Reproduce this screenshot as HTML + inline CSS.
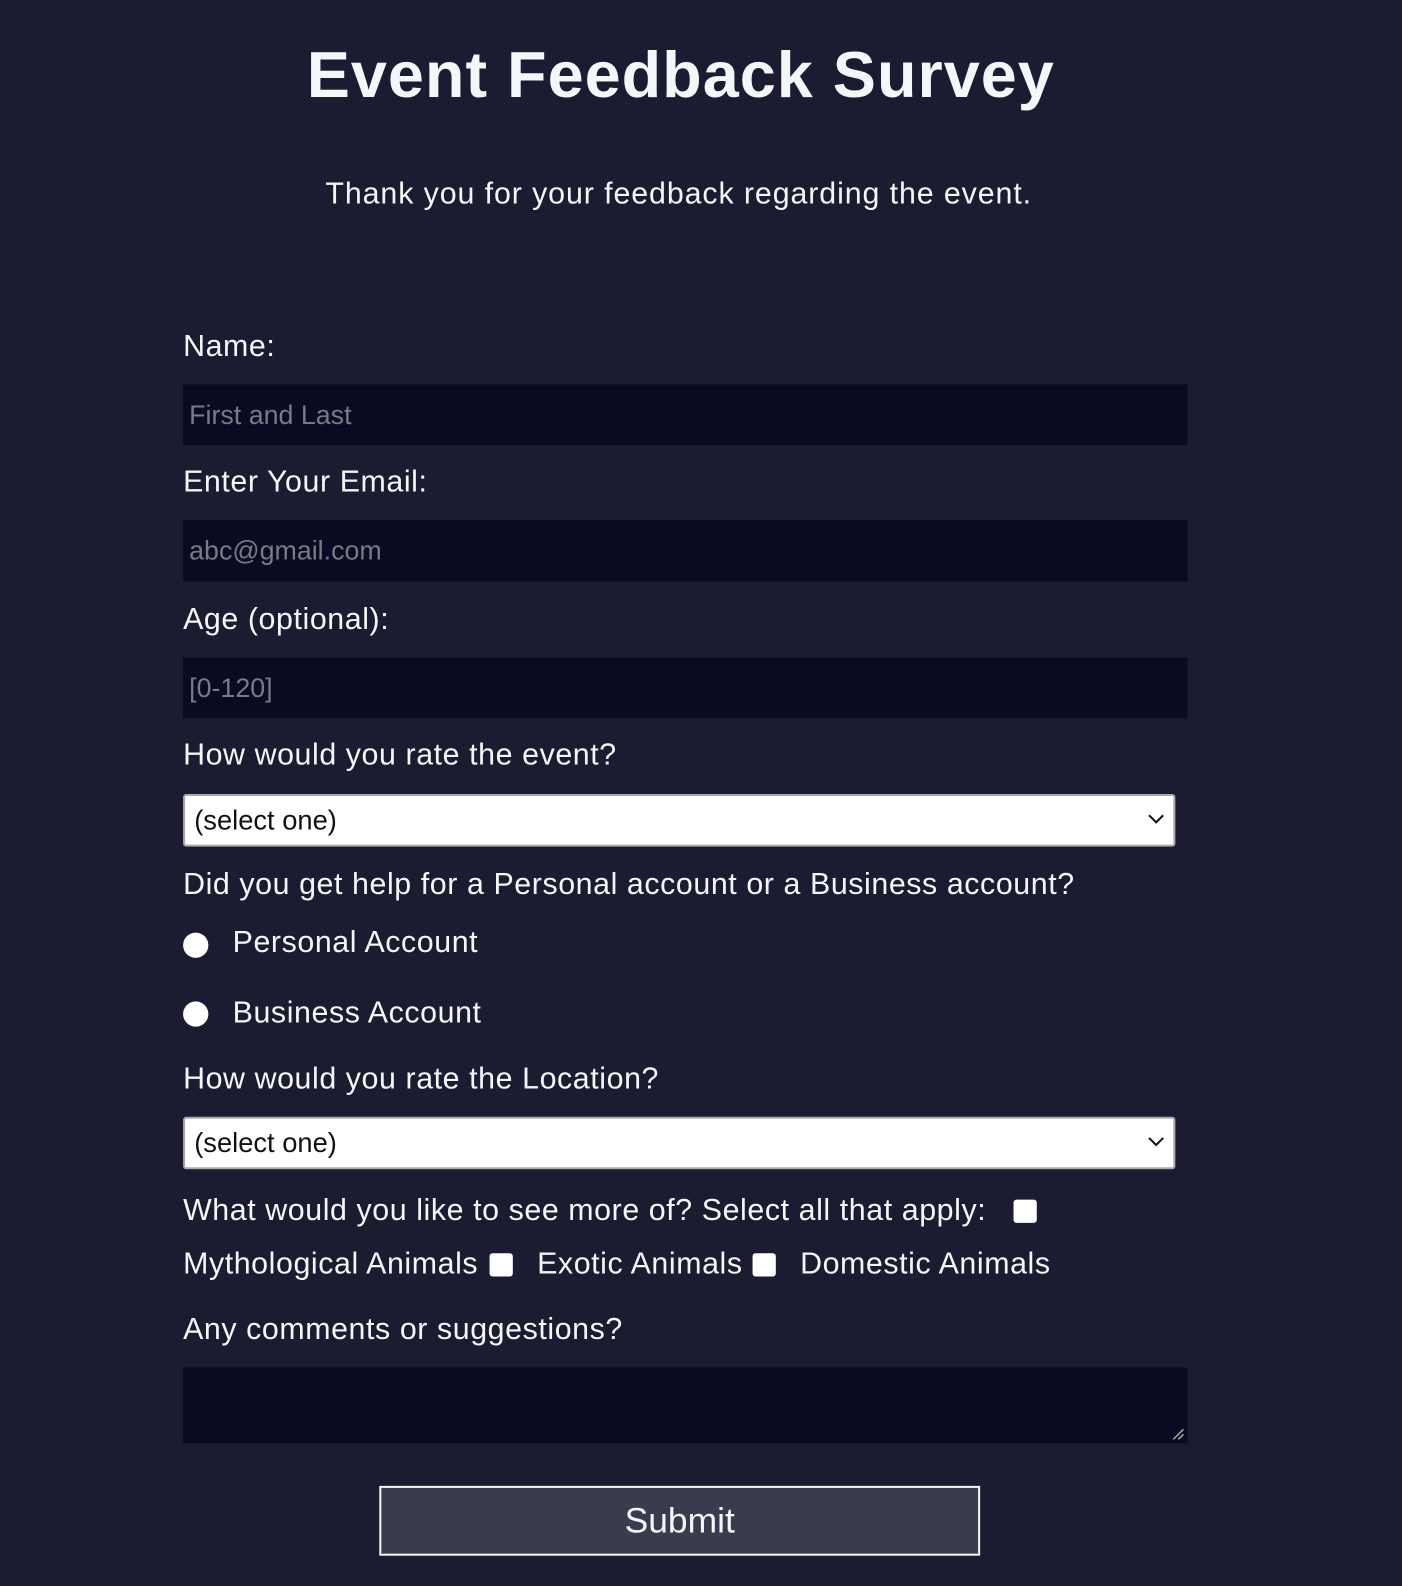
<!DOCTYPE html>
<html><head><meta charset="utf-8"><style>
*{margin:0;padding:0;box-sizing:border-box}
body{width:1402px;height:1586px;background:#1b1b32;overflow:hidden}
#w{width:1386px;height:1568px;position:relative;transform:scale(1.0115);transform-origin:0 0;color:#f5f6f7;font-family:"Liberation Sans",Tahoma,sans-serif}
.a{position:absolute;white-space:nowrap}
.t{font-size:30px;line-height:34px;letter-spacing:0.58px}
.in{position:absolute;left:181px;width:993px;background:#0a0a23;color:#7a7a85;font-size:26.5px;padding-left:6px;display:flex;align-items:center}
.sel{position:absolute;left:181px;width:981px;height:52px;background:#fff;border:2px solid #aaa;border-radius:3px;color:#111;font-size:27px;padding-left:9px;display:flex;align-items:center}
.sel svg{position:absolute;right:9px;top:18px}
.rad{position:absolute;width:25px;height:25px;border-radius:50%;background:#fff;left:181px}
.cb{position:absolute;width:23px;height:23px;background:#fff;border-radius:3px}
</style></head><body><div id="w">
<div class="a" style="left:0;width:1346px;text-align:center;top:36px;font-size:64px;font-weight:bold;line-height:76px;letter-spacing:1px">Event Feedback Survey</div>
<div class="a" style="left:0;width:1342px;text-align:center;top:175px;font-size:30px;line-height:34px;letter-spacing:0.9px">Thank you for your feedback regarding the event.</div>
<div class="a t" style="left:181px;top:326px">Name:</div>
<div class="in" style="top:380px;height:60px">First and Last</div>
<div class="a t" style="left:181px;top:460px">Enter Your Email:</div>
<div class="in" style="top:514px;height:61px">abc@gmail.com</div>
<div class="a t" style="left:181px;top:596px">Age (optional):</div>
<div class="in" style="top:650px;height:60px">[0-120]</div>
<div class="a t" style="left:181px;top:730px">How would you rate the event?</div>
<div class="sel" style="top:785px">(select one)<svg width="16" height="10" viewBox="0 0 16 10"><path d="M1 1l7 7 7-7" stroke="#111" stroke-width="2" fill="none"/></svg></div>
<div class="a t" style="left:181px;top:858px">Did you get help for a Personal account or a Business account?</div>
<div class="rad" style="top:922px"></div>
<div class="a t" style="left:230px;top:915px">Personal Account</div>
<div class="rad" style="top:990px"></div>
<div class="a t" style="left:230px;top:985px">Business Account</div>
<div class="a t" style="left:181px;top:1050px">How would you rate the Location?</div>
<div class="sel" style="top:1104px">(select one)<svg width="16" height="10" viewBox="0 0 16 10"><path d="M1 1l7 7 7-7" stroke="#111" stroke-width="2" fill="none"/></svg></div>
<div class="a t" style="left:181px;top:1180px">What would you like to see more of? Select all that apply:</div>
<div class="cb" style="left:1002px;top:1186px"></div>
<div class="a t" style="left:181px;top:1233px">Mythological Animals</div>
<div class="cb" style="left:484px;top:1239px"></div>
<div class="a t" style="left:531px;top:1233px">Exotic Animals</div>
<div class="cb" style="left:744px;top:1239px"></div>
<div class="a t" style="left:791px;top:1233px">Domestic Animals</div>
<div class="a t" style="left:181px;top:1298px">Any comments or suggestions?</div>
<div class="in" style="top:1352px;height:75px"><svg style="position:absolute;right:3px;bottom:3px" width="14" height="14"><path d="M13 3L3 13M13 8L8 13" stroke="#aaa" stroke-width="1.5"/></svg></div>
<div class="a" style="left:375px;top:1469px;width:594px;height:69px;background:#3b3b4f;border:2px solid #f5f6f7;font-size:35px;display:flex;align-items:center;justify-content:center">Submit</div>
</div></body></html>
